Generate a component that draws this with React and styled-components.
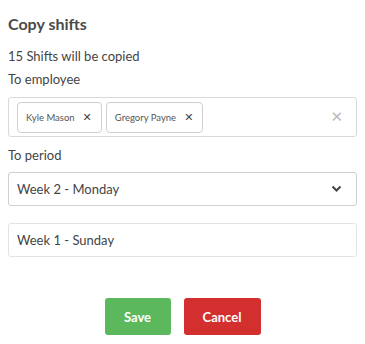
import React from 'react';
import styled, { createGlobalStyle } from 'styled-components';

const GlobalStyle = createGlobalStyle`
  body {
    margin: 0;
    background: #fff;
    font-family: Lato, "Liberation Sans", sans-serif;
    color: #444;
  }
`;

const Container = styled.div`
  width: 365px;
  padding: 14px 8px 0 8px;
  box-sizing: border-box;
`;

const Title = styled.h3`
  margin: 0 0 14px 0;
  font-size: 16px;
  font-weight: 700;
  color: #4a4a4a;
  line-height: 20px;
`;

const Label = styled.div`
  font-size: 13px;
  line-height: 16px;
  color: #444;
  margin-bottom: ${({ gap }) => gap}px;
`;

const MultiBox = styled.div`
  display: flex;
  align-items: center;
  height: 40px;
  box-sizing: border-box;
  border: 1px solid #d9d9d9;
  border-radius: 3px;
  padding: 0 8px;
  gap: 4px;
  margin-bottom: 10px;
`;

const Chip = styled.div`
  display: flex;
  align-items: center;
  height: 31px;
  box-sizing: border-box;
  border: 1px solid #cfcfcf;
  border-radius: 4px;
  padding: 0 9px 0 8px;
  font-size: 9.5px;
  color: #555;
  gap: 8px;
`;

const ChipX = styled.span`
  font-size: 11px;
  font-weight: 700;
  color: #444;
  font-family: "DejaVu Sans", sans-serif;
`;

const Spacer = styled.div`
  flex: 1;
`;

const ClearX = styled.span`
  color: #bbb;
  font-size: 15px;
  margin-right: 5px;
  font-family: "DejaVu Sans", sans-serif;
`;

const Field = styled.div`
  display: flex;
  align-items: center;
  height: 34px;
  box-sizing: border-box;
  border: 1px solid ${({ strong }) => (strong ? '#cfcfcf' : '#e3e3e3')};
  border-radius: 3px;
  padding: 0 14px 0 8px;
  font-size: 13px;
  color: #444;
  margin-bottom: ${({ mb }) => mb}px;
`;

const Buttons = styled.div`
  display: flex;
  justify-content: center;
  gap: 13px;
  margin-top: 41px;
`;

const Button = styled.button`
  height: 37px;
  width: ${({ w }) => w}px;
  border: none;
  border-radius: 3px;
  background: ${({ bg }) => bg};
  color: #fff;
  font-family: Lato, "Liberation Sans", sans-serif;
  font-size: 13px;
  font-weight: 700;
`;

const Chevron = () => (
  <svg width="11" height="8" viewBox="0 0 11 8">
    <path d="M1.5 1.5 L5.5 5.5 L9.5 1.5" fill="none" stroke="#444" strokeWidth="2" />
  </svg>
);

export default function App() {
  return (
    <Container>
      <GlobalStyle />
      <Title>Copy shifts</Title>
      <Label gap={7}>15 Shifts will be copied</Label>
      <Label gap={10}>To employee</Label>
      <MultiBox>
        <Chip>
          Kyle Mason <ChipX>✕</ChipX>
        </Chip>
        <Chip>
          Gregory Payne <ChipX>✕</ChipX>
        </Chip>
        <Spacer />
        <ClearX>✕</ClearX>
      </MultiBox>
      <Label gap={9}>To period</Label>
      <Field strong mb={17}>
        Week 2 - Monday
        <Spacer />
        <Chevron />
      </Field>
      <Field mb={0}>Week 1 - Sunday</Field>
      <Buttons>
        <Button w={66} bg="#5cb85c">Save</Button>
        <Button w={77} bg="#d32f2f">Cancel</Button>
      </Buttons>
    </Container>
  );
}
